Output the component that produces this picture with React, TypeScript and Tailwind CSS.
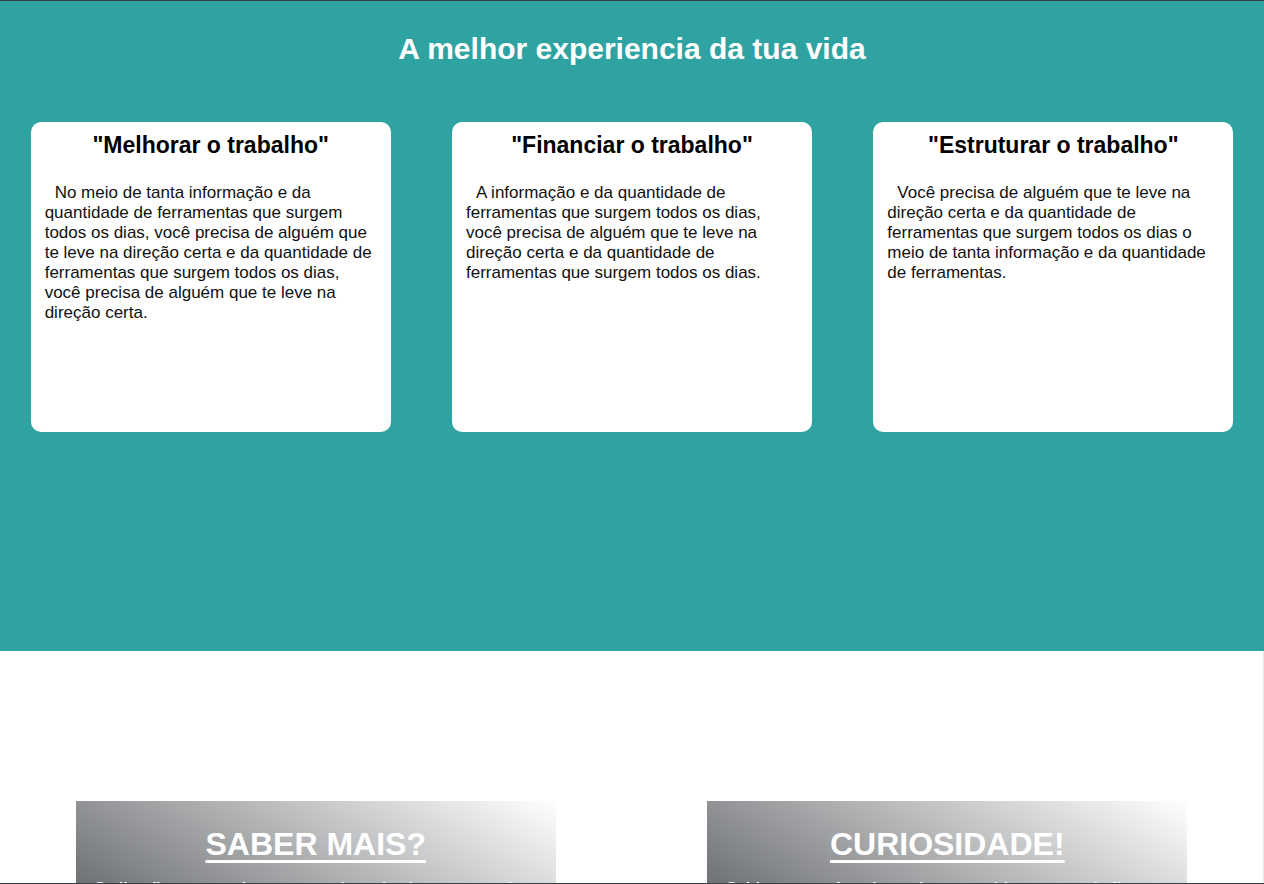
import React from "react";

const cards = [
  {
    title: '"Melhorar o trabalho"',
    text: "No meio de tanta informação e da quantidade de ferramentas que surgem todos os dias, você precisa de alguém que te leve na direção certa e da quantidade de ferramentas que surgem todos os dias, você precisa de alguém que te leve na direção certa.",
  },
  {
    title: '"Financiar o trabalho"',
    text: "A informação e da quantidade de ferramentas que surgem todos os dias, você precisa de alguém que te leve na direção certa e da quantidade de ferramentas que surgem todos os dias.",
  },
  {
    title: '"Estruturar o trabalho"',
    text: "Você precisa de alguém que te leve na direção certa e da quantidade de ferramentas que surgem todos os dias o meio de tanta informação e da quantidade de ferramentas.",
  },
];

const boxes = [
  {
    title: "SABER MAIS?",
    text: "Se liga fica por aqui que tem muita coisa boa esperando por você nesta página.",
  },
  {
    title: "CURIOSIDADE!",
    text: "Sabia que você pode mudar a tua vida com o trabalho certo?",
  },
];

export default function App() {
  return (
    <div className="h-[884px] overflow-hidden border-y border-[#3b3f43] font-['Liberation_Sans',Arial,sans-serif]">
      {/* hero */}
      <section className="h-[650px] bg-[#2fa3a1]">
        <h1 className="pt-[29px] text-center text-[30px] font-bold leading-[38px] text-white">
          A melhor experiencia da tua vida
        </h1>
        <div className="mt-[54px] flex justify-around">
          {cards.map((c) => (
            <div key={c.title} className="h-[310px] w-[360px] rounded-[10px] bg-white pl-[14px] pr-[14px] pt-[9px]">
              <h2 className="text-center text-[23px] font-bold leading-[28px] text-black">{c.title}</h2>
              <p className="mt-[24px] indent-[10px] text-[17px] leading-[20px] text-[#111]">{c.text}</p>
            </div>
          ))}
        </div>
      </section>

      {/* lower section */}
      <section className="h-[300px] border-r border-[#e6e6e6] bg-white pt-[150px]">
        <div className="flex justify-around">
          {boxes.map((b) => (
            <div
              key={b.title}
              className="h-[267px] w-[480px] bg-[linear-gradient(to_top_right,#22262b,#ffffff)] px-[19px] pt-[24px]"
            >
              <h2 className="text-center text-[32px] font-bold leading-[38px] text-white underline decoration-[3px] underline-offset-[5px]">
                {b.title}
              </h2>
              <p className="mt-[16px] text-[16px] font-bold leading-[20px] text-white">{b.text}</p>
            </div>
          ))}
        </div>
      </section>
    </div>
  );
}
